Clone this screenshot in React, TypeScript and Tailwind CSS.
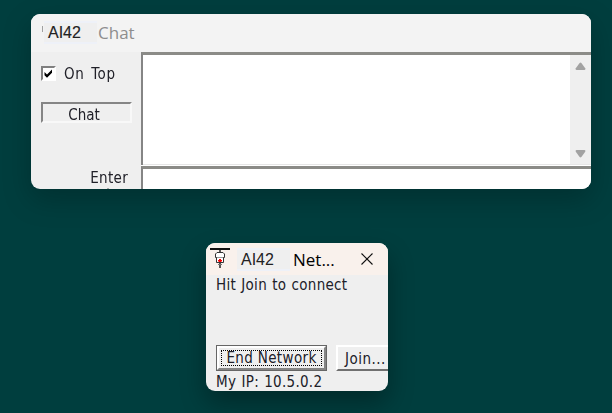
import React from "react";

function TitlePatch({ className, children }: { className: string; children: React.ReactNode }) {
  return (
    <span className={`h-[23px] shrink-0 whitespace-pre border-y-2 border-[#eef1f8] bg-[#efefef] font-['Liberation_Sans',sans-serif] text-[16px] text-[#222] ${className}`}>
      {children}
    </span>
  );
}

function ChatWindow() {
  return (
    <section className="ml-[31px] flex h-[175px] w-[560px] flex-col overflow-hidden rounded-[9px] bg-[#efefef]">
      <header className="flex h-[38px] shrink-0 items-start bg-[#f3f3f3] pl-[11px] pt-[7px]">
        <span className="mt-[5px] h-[6px] w-px bg-[#a0a0a0]" />
        <TitlePatch className="ml-[1px] w-[53px] pl-[4px] leading-[19px] [-webkit-text-stroke:0.15px_#222]">AI42</TitlePatch>
        <span className="ml-[1px] font-['Open_Sans','Noto_Sans',sans-serif] text-[17px] leading-[23px] text-[#8e8e8e]">Chat</span>
      </header>
      <div className="flex min-h-0 flex-1">
        <aside className="flex w-[110px] shrink-0 flex-col leading-[18px]">
          <label className="ml-[10px] mt-[12px] flex h-[18px] items-center">
            <span className="flex h-[15px] w-[15px] items-center justify-center border-2 border-b-white border-l-[#808080] border-r-white border-t-[#808080] bg-white">
              <svg width="11" height="11" viewBox="0 0 11 11">
                <path d="M1.5 4 L4 6.5 L9 1.5 V4.8 L4 9.8 L1.5 7.3 Z" fill="#000" />
              </svg>
            </span>
            <span className="ml-[8px] whitespace-nowrap pt-px tracking-[0.6px] [word-spacing:2px]">On Top</span>
          </label>
          <button className="ml-[10px] mt-[20px] flex h-[21px] w-[91px] items-center justify-center border-2 border-b-[#f8f8f8] border-l-[#858585] border-r-[#f8f8f8] border-t-[#858585] pr-[5px] pt-[4px] leading-[18px]">
            Chat
          </button>
          <div className="mt-[46px] w-[97px] text-right leading-[19px] tracking-[0.3px]">Enter</div>
          <i className="ml-[76px] h-px w-[2px] shrink-0 bg-[#aaa]" />
        </aside>
        <div className="flex flex-1 flex-col">
          <div className="flex h-[113px] shrink-0 border-l-2 border-t-[3px] border-l-[#858585] border-t-[#8b8b87] bg-white">
            <div className="flex-1 border-b border-[#e6e6e6]" />
            <div className="flex w-[21px] flex-col items-center justify-between border-b border-[#e6e6e6] bg-[#efefef] pb-[6px] pt-[7px]">
              <svg width="11" height="8" viewBox="0 0 12 9">
                <path d="M5 1 Q6 0 7 1 L11.3 7 Q12 9 10.5 9 H1.5 Q0 9 0.7 7 Z" fill="#a2a2a2" />
              </svg>
              <svg width="11" height="8" viewBox="0 0 12 9">
                <path d="M5 8 Q6 9 7 8 L11.3 2 Q12 0 10.5 0 H1.5 Q0 0 0.7 2 Z" fill="#a2a2a2" />
              </svg>
            </div>
          </div>
          <div className="h-px bg-white" />
          <div className="flex-1 border-l-2 border-t-[3px] border-l-[#858585] border-t-[#8b8b87] bg-white" />
        </div>
      </div>
    </section>
  );
}

function NetworkIcon() {
  return (
    <svg width="20" height="20" viewBox="0 0 20 20" fill="none">
      <path d="M0 1H20" stroke="#111" strokeWidth="2" />
      <path d="M10 2V5M10 15V20" stroke="#222" strokeWidth="1.5" />
      <path d="M7 4.5H13L14.5 6V9.5H5.5V6Z" fill="#fff" stroke="#333" />
      <path d="M6.5 9.5V14.5H13.5V9.5" fill="#fff" stroke="#333" />
      <path d="M8 16.5H12" stroke="#777" />
      <path d="M9 11H11V12H12V13.5H11V14H9V13.5H8V12H9Z" fill="#f00" />
    </svg>
  );
}

function NetworkWindow() {
  return (
    <section className="ml-[206px] mt-[54px] flex h-[148px] w-[182px] flex-col overflow-hidden rounded-[9px] bg-[#efefef] shadow-[0_12px_26px_rgba(0,0,0,0.32)]">
      <header className="flex h-[32px] shrink-0 items-start bg-[#f9f1ec] pl-[4px] pt-[5px]">
        <NetworkIcon />
        <TitlePatch className="ml-[7px] w-[53px] pl-[4px] leading-[19px]">AI42</TitlePatch>
        <span className="ml-[3px] w-[44px] font-['Open_Sans','Noto_Sans',sans-serif] text-[17px] leading-[23px] text-black">Net...</span>
        <svg className="ml-[24px] mt-[5px]" width="12" height="12" viewBox="0 0 12 12">
          <path d="M0.5 0.5L11.5 11.5M11.5 0.5L0.5 11.5" stroke="#111" strokeWidth="1.1" />
        </svg>
      </header>
      <div className="flex flex-1 flex-col whitespace-nowrap pl-[10px]">
        <div className="h-[70px] pt-px leading-[19px] tracking-[0.3px] [word-spacing:0.6px]">Hit Join to connect</div>
        <div className="flex h-[26px] shrink-0">
          <button className="h-[26px] w-[111px] shrink-0 border border-[#666] leading-none">
            <span className="flex h-full border-2 border-b-[#858585] border-l-white border-r-[#858585] border-t-white p-[2px]">
              <span className="flex flex-1 items-center justify-center border border-dotted border-black pt-px tracking-[0.35px]">End Network</span>
            </span>
          </button>
          <button className="ml-[9px] flex h-[26px] w-[75px] shrink-0 items-center border-2 border-b-[#707070] border-l-white border-r-[#707070] border-t-white pl-[7px] pt-[2px] leading-none tracking-[0.5px]">
            Join...
          </button>
        </div>
        <div className="mt-[2px] leading-[19px] tracking-[0.3px] [word-spacing:0.6px]">My IP: 10.5.0.2</div>
      </div>
    </section>
  );
}

export default function App() {
  return (
    <main className="h-[413px] w-[612px] overflow-hidden bg-[#003e3e] pt-[14px] font-['DejaVu_Sans_Condensed','DejaVu_Sans',sans-serif] text-[15px] text-[#202028]">
      <div className="h-[175px] w-[591px] drop-shadow-[0_10px_14px_rgba(0,0,0,0.22)]">
        <ChatWindow />
      </div>
      <NetworkWindow />
    </main>
  );
}
